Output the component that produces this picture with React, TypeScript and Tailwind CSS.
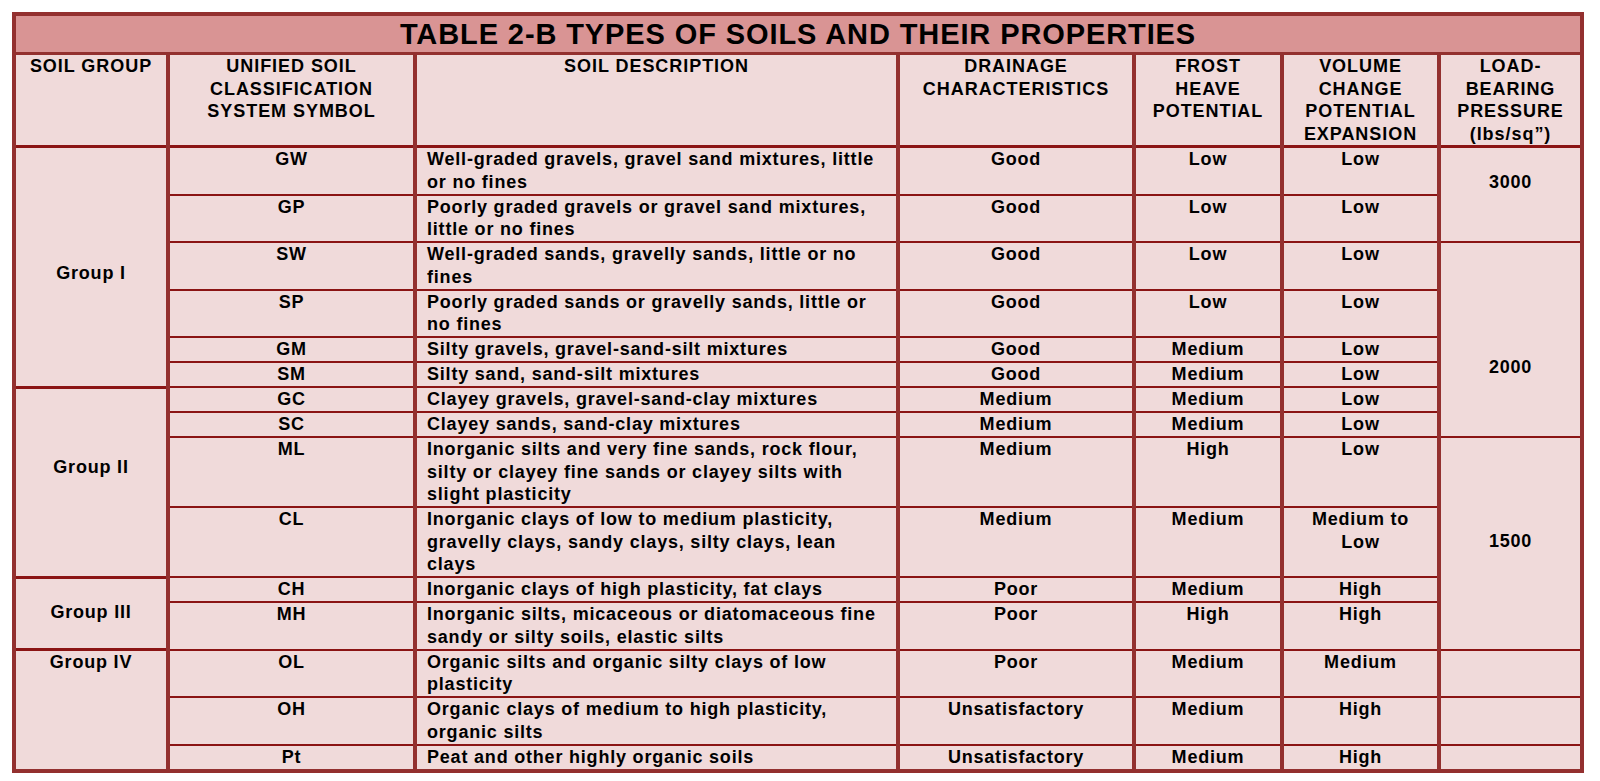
const headers: string[][] = [
  ["SOIL GROUP"],
  ["UNIFIED SOIL", "CLASSIFICATION", "SYSTEM SYMBOL"],
  ["SOIL DESCRIPTION"],
  ["DRAINAGE", "CHARACTERISTICS"],
  ["FROST", "HEAVE", "POTENTIAL"],
  ["VOLUME", "CHANGE", "POTENTIAL", "EXPANSION"],
  ["LOAD-", "BEARING", "PRESSURE", "(lbs/sq”)"],
];

type Soil = {
  sym: string;
  desc: string[];
  drain: string;
  frost: string;
  vol: string[];
};

const soils: Soil[] = [
  { sym: "GW", desc: ["Well-graded gravels, gravel sand mixtures, little", "or no fines"], drain: "Good", frost: "Low", vol: ["Low"] },
  { sym: "GP", desc: ["Poorly graded gravels or gravel sand mixtures,", "little or no fines"], drain: "Good", frost: "Low", vol: ["Low"] },
  { sym: "SW", desc: ["Well-graded sands, gravelly sands, little or no", "fines"], drain: "Good", frost: "Low", vol: ["Low"] },
  { sym: "SP", desc: ["Poorly graded sands or gravelly sands, little or", "no fines"], drain: "Good", frost: "Low", vol: ["Low"] },
  { sym: "GM", desc: ["Silty gravels, gravel-sand-silt mixtures"], drain: "Good", frost: "Medium", vol: ["Low"] },
  { sym: "SM", desc: ["Silty sand, sand-silt mixtures"], drain: "Good", frost: "Medium", vol: ["Low"] },
  { sym: "GC", desc: ["Clayey gravels, gravel-sand-clay mixtures"], drain: "Medium", frost: "Medium", vol: ["Low"] },
  { sym: "SC", desc: ["Clayey sands, sand-clay mixtures"], drain: "Medium", frost: "Medium", vol: ["Low"] },
  { sym: "ML", desc: ["Inorganic silts and very fine sands, rock flour,", "silty or clayey fine sands or clayey silts with", "slight plasticity"], drain: "Medium", frost: "High", vol: ["Low"] },
  { sym: "CL", desc: ["Inorganic clays of low to medium plasticity,", "gravelly clays, sandy clays, silty clays, lean", "clays"], drain: "Medium", frost: "Medium", vol: ["Medium to", "Low"] },
  { sym: "CH", desc: ["Inorganic clays of high plasticity, fat clays"], drain: "Poor", frost: "Medium", vol: ["High"] },
  { sym: "MH", desc: ["Inorganic silts, micaceous or diatomaceous fine", "sandy or silty soils, elastic silts"], drain: "Poor", frost: "High", vol: ["High"] },
  { sym: "OL", desc: ["Organic silts and organic silty clays of low", "plasticity"], drain: "Poor", frost: "Medium", vol: ["Medium"] },
  { sym: "OH", desc: ["Organic clays of medium to high plasticity,", "organic silts"], drain: "Unsatisfactory", frost: "Medium", vol: ["High"] },
  { sym: "Pt", desc: ["Peat and other highly organic soils"], drain: "Unsatisfactory", frost: "Medium", vol: ["High"] },
];

// spanning cells, keyed by the row they start on
const groups: Record<number, { label: string; span: number; pad: string }> = {
  0: { label: "Group I", span: 6, pad: "pt-[114px]" },
  6: { label: "Group II", span: 4, pad: "pt-[67px]" },
  10: { label: "Group III", span: 2, pad: "pt-[22px]" },
  12: { label: "Group IV", span: 3, pad: "pt-0" },
};

const loads: Record<number, { value: string; span: number; pad: string }> = {
  0: { value: "3000", span: 2, pad: "pt-[23px]" },
  2: { value: "2000", span: 6, pad: "pt-[113px]" },
  8: { value: "1500", span: 4, pad: "pt-[92px]" },
  12: { value: "", span: 1, pad: "pt-0" },
  13: { value: "", span: 1, pad: "pt-0" },
  14: { value: "", span: 1, pad: "pt-0" },
};

const cell =
  "border-x-4 border-y-2 border-x-[#93302f] border-y-[#8b1414] bg-[#f0dada] align-top p-0 leading-[22.5px]";

const Lines = ({ lines }: { lines: string[] }) => (
  <>
    {lines.map((l, i) => (
      <div key={i}>{l}</div>
    ))}
  </>
);

export default function App() {
  return (
    <div className="min-h-screen bg-white pt-[12px] pl-[12px] font-['Liberation_Sans',Arial,sans-serif] text-black font-bold">
      <table className="border-collapse table-fixed w-[1572px] border-4 border-[#93302f] text-[18px] tracking-[0.8px]">
        <colgroup>
          <col className="w-[154px]" />
          <col className="w-[247px]" />
          <col className="w-[483px]" />
          <col className="w-[236px]" />
          <col className="w-[148px]" />
          <col className="w-[157px]" />
          <col className="w-[143px]" />
        </colgroup>
        <thead>
          <tr>
            <th
              colSpan={7}
              className="border-4 border-b-[3px] border-[#93302f] bg-[#d99494] h-[36px] p-0 text-center text-[29px] leading-[36px] tracking-[0.9px]"
            >
              TABLE 2-B TYPES OF SOILS AND THEIR PROPERTIES
            </th>
          </tr>
          <tr>
            {headers.map((h, i) => (
              <th key={i} className={`${cell} border-b-[3px] h-[90px] text-center font-bold tracking-[0.95px]`}>
                <Lines lines={h} />
              </th>
            ))}
          </tr>
        </thead>
        <tbody>
          {soils.map((s, i) => (
            <tr key={s.sym}>
              {groups[i] && (
                <td rowSpan={groups[i].span} className={`${cell} border-y-[3px] text-center ${groups[i].pad}`}>
                  {groups[i].label}
                </td>
              )}
              <td className={`${cell} pb-[0.5px] text-center`}>{s.sym}</td>
              <td className={`${cell} pb-[0.5px] pl-[10px] whitespace-nowrap`}>
                <Lines lines={s.desc} />
              </td>
              <td className={`${cell} pb-[0.5px] text-center`}>{s.drain}</td>
              <td className={`${cell} pb-[0.5px] text-center`}>{s.frost}</td>
              <td className={`${cell} pb-[0.5px] text-center`}>
                <Lines lines={s.vol} />
              </td>
              {loads[i] && (
                <td rowSpan={loads[i].span} className={`${cell} text-center ${loads[i].pad}`}>
                  {loads[i].value}
                </td>
              )}
            </tr>
          ))}
        </tbody>
      </table>
    </div>
  );
}
